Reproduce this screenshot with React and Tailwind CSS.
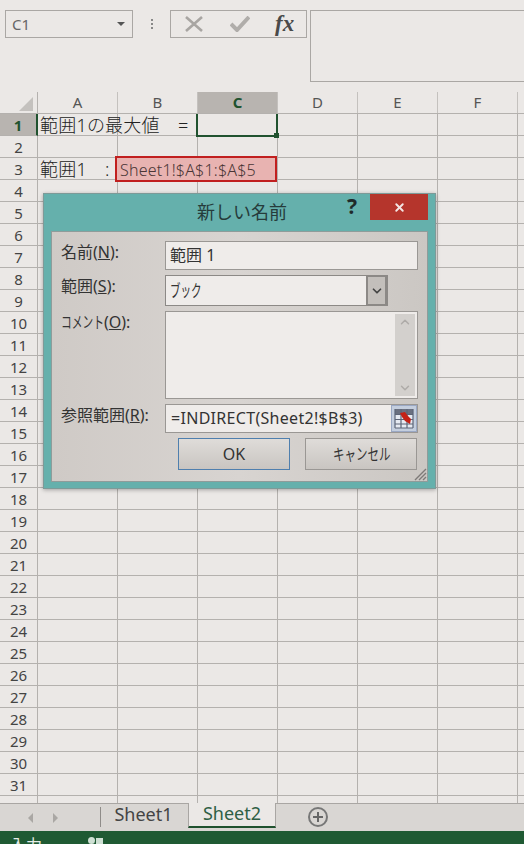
import { X, ChevronDown, ChevronUp } from 'lucide-react'

const font = 'font-["Noto_Sans","Noto_Sans_CJK_JP",sans-serif]'
const cols = ['A', 'B', 'C', 'D', 'E', 'F']
const rows = Array.from({ length: 32 }, (_, i) => i + 1)

// the reference's katakana is much narrower than Noto's, so squeeze it
function Kana({ w, scale, children }) {
  return (
    <span className={`inline-block whitespace-nowrap origin-left ${w} ${scale}`}>{children}</span>
  )
}

function Row({ n }) {
  const active = n === 1
  return (
    <div className="flex h-[22px] shrink-0">
      <div
        className={`w-[38px] shrink-0 flex items-center justify-center pt-[2px] border-r border-b border-[#b4b1ae] text-[15px] ${
          active ? 'bg-[#b8b4b0] text-[#20522f] font-bold border-r-[#20522f] border-r-2' : 'text-[#444]'
        }`}
      >
        {n < 32 ? n : ''}
      </div>
      {cols.map(c => (
        <div key={c} className="relative w-[80px] shrink-0 h-full border-r border-b border-[#b4b1ae] whitespace-nowrap">
          {n === 1 && c === 'A' && (
            <span className="absolute left-[2px] top-[-3px] text-[18px] leading-[28px] font-light tracking-[0.2px] text-[#222] z-10">範囲1の最大値　=</span>
          )}
          {n === 3 && c === 'A' && (
            <span className="absolute left-[2px] top-[-3px] text-[18px] leading-[28px] font-light tracking-[0.2px] text-[#222]">範囲1　:</span>
          )}
          {n === 1 && c === 'C' && (
            <div className="absolute left-[-2px] top-[-2px] w-[82px] h-[25px] border-2 border-[#20522f] z-10">
              <div className="absolute right-[-3px] bottom-[-3px] w-[5px] h-[5px] bg-[#20522f]" />
            </div>
          )}
          {n === 3 && c === 'B' && (
            <div className="absolute left-[-3px] top-[-2px] w-[162px] h-[26px] border-2 border-[#c11f1f] bg-[#e8b3b1] z-10 pl-[3px] text-[16px] leading-[24px] font-light tracking-[0.2px] text-[#4a3636]">
              Sheet1!$A$1:$A$5
            </div>
          )}
        </div>
      ))}
      <div className="flex-1 border-b border-[#b4b1ae]" />
    </div>
  )
}

function Field({ label, mnemonic, children, className = '' }) {
  return (
    <div className={`flex ${className}`}>
      <div className="w-[113px] shrink-0 pl-[9px] pt-[1px] text-[16px] leading-[20px] text-[#333] whitespace-nowrap">
        {label}(<span className="underline">{mnemonic}</span>):
      </div>
      {children}
    </div>
  )
}

function RefIcon() {
  return (
    <svg width="26" height="27" viewBox="0 0 26 27" className="shrink-0">
      <rect x="0.5" y="0.5" width="25" height="26" fill="#c4cede" stroke="#9aa8c4" />
      <rect x="4" y="4" width="18" height="19" fill="#e6eaf2" />
      <path d="M4 4h18v5H4z" fill="#6a7080" />
      <path d="M4 9.5h18M4 14.5h18M4 19h18M4 23h18M4 4v19M10 4v19M16 4v19M22 4v19" stroke="#5d6577" strokeWidth="1.2" fill="none" />
      <path d="M9 8l5-1 3 4 3 3-1 5-5-3-3-4z" fill="#c42116" />
    </svg>
  )
}

function Dialog() {
  return (
    <div className="absolute left-[43px] top-[193px] w-[393px] h-[296px] bg-[#65b0ac] border border-[#7d9a98] shadow-[0_1px_4px_rgba(0,0,0,0.3)] z-20 px-[7px] pb-[6px] flex flex-col">
      <div className="relative h-[37px] shrink-0 flex items-center justify-center">
        <span className="text-[18px] text-[#263c3b] pl-[5px]">新しい名前</span>
        <span className="absolute left-[296px] top-[-1px] text-[21px] font-bold leading-[26px] text-[#1f2a2a]">?</span>
        <div className="absolute right-0 top-0 w-[58px] h-[26px] bg-[#b5352c] flex items-center justify-center">
          <X size={13} strokeWidth={3.5} className="text-[#f3e6e4]" />
        </div>
      </div>
      <div className="relative flex-1 border border-[#8f9c9a] bg-gradient-to-r from-[#cfcac6] via-[#d8d4d1] to-[#cbc7c3] pt-[9px] pr-[9px] flex flex-col">
        <Field label="名前" mnemonic="N">
          <div className="flex-1 h-[29px] border border-[#9a9794] bg-[#efecea] pl-[4px] text-[16px] leading-[27px] text-[#333]">範囲 1</div>
        </Field>
        <Field label="範囲" mnemonic="S" className="mt-[5px]">
          <div className="w-[223px] h-[31px] border border-[#8c8986] bg-[#efecea] flex">
            <div className="flex-1 pl-[4px] text-[17px] leading-[30px] text-[#333]">
              <Kana w="w-[31px]" scale="scale-x-[0.62]">ブック</Kana>
            </div>
            <div className="w-[21px] border-l-2 border-r-2 border-t border-b border-[#8c8986] bg-[#c3bfbb] flex items-center justify-center">
              <ChevronDown size={14} strokeWidth={3} className="text-[#444]" />
            </div>
          </div>
        </Field>
        <Field label={<Kana w="w-[43px]" scale="scale-x-[0.67]">コメント</Kana>} mnemonic="O" className="mt-[5px]">
          <div className="flex-1 h-[88px] border border-[#9a9794] bg-[#efecea] flex justify-end pr-[2px] py-[2px]">
            <div className="w-[20px] bg-[#d3d0cd] flex flex-col justify-between items-center py-[1px]">
              <ChevronUp size={14} strokeWidth={2.5} className="text-[#aeaba8]" />
              <ChevronDown size={14} strokeWidth={2.5} className="text-[#aeaba8]" />
            </div>
          </div>
        </Field>
        <Field label="参照範囲" mnemonic="R" className="mt-[5px]">
          <div className="flex-1 h-[29px] border border-[#9a9794] bg-[#efecea] flex">
            <div className="flex-1 pl-[5px] text-[16px] leading-[27px] tracking-[0.3px] text-[#333] whitespace-nowrap">=INDIRECT(Sheet2!$B$3)</div>
            <RefIcon />
          </div>
        </Field>
        <div className="flex mt-[5px] ml-[126px] gap-[15px] text-[16px] text-[#333]">
          <div className="w-[112px] h-[32px] border border-[#4f7fae] bg-gradient-to-b from-[#dfdcd9] to-[#c9c5c1] flex items-center justify-center">OK</div>
          <div className="w-[112px] h-[32px] border border-[#9a9794] bg-gradient-to-b from-[#dfdcd9] to-[#c9c5c1] flex items-center justify-center">
            <Kana w="w-[57px]" scale="scale-x-[0.72]">キャンセル</Kana>
          </div>
        </div>
        <svg width="14" height="14" viewBox="0 0 14 14" className="absolute right-0 bottom-0">
          <path d="M13 2L2 13M13 6L6 13M13 10L10 13" stroke="#7d7a78" strokeWidth="1.4" />
        </svg>
      </div>
    </div>
  )
}

export default function App() {
  return (
    <div className={`relative w-[524px] h-[844px] overflow-hidden bg-[#ebe8e6] flex flex-col ${font}`}>
      {/* Formula bar */}
      <div className="h-[92px] shrink-0 flex items-start pt-[10px] pl-[5px]">
        <div className="w-[128px] h-[28px] border border-[#aaa7a4] flex items-center justify-between pl-[6px] pr-[7px] text-[15px] text-[#666]">
          C1
          <span className="w-0 h-0 border-x-[4px] border-x-transparent border-t-[4px] border-t-[#555]" />
        </div>
        <div className="w-[37px] h-[28px] flex items-center justify-center">
          <div className="flex flex-col gap-[2px]">
            <span className="w-[2px] h-[2px] bg-[#888]" />
            <span className="w-[2px] h-[2px] bg-[#888]" />
            <span className="w-[2px] h-[2px] bg-[#888]" />
          </div>
        </div>
        <div className="w-[137px] h-[28px] border border-[#aaa7a4] flex items-center pl-[14px]">
          <svg width="18" height="16" viewBox="0 0 18 16" className="shrink-0">
            <path d="M1 1l16 14M17 1L1 15" stroke="#a8a5a2" strokeWidth="2.6" fill="none" />
          </svg>
          <svg width="20" height="16" viewBox="0 0 20 16" className="shrink-0 ml-[27px]">
            <path d="M1 8l6 6L19 1" stroke="#b0adaa" strokeWidth="4" fill="none" />
          </svg>
          <span className="ml-[25px] font-['Liberation_Serif',serif] italic font-bold text-[23px] leading-[28px] text-[#4a4a4a]">fx</span>
        </div>
        <div className="ml-[3px] flex-1 h-[72px] border border-[#aaa7a4] border-r-0" />
      </div>

      {/* Column headers */}
      <div className="flex h-[22px] shrink-0 border-b border-[#b4b1ae]">
        <div className="w-[38px] shrink-0 border-r border-[#b4b1ae] relative">
          <span className="absolute right-[4px] bottom-[2px] w-0 h-0 border-l-[14px] border-l-transparent border-b-[14px] border-b-[#c4c1be]" />
        </div>
        {cols.map(c => (
          <div
            key={c}
            className={`w-[80px] shrink-0 flex items-center justify-center text-[15px] border-r border-[#c4c1be] ${
              c === 'C' ? 'bg-[#b8b4b0] text-[#20522f] font-bold' : 'text-[#555]'
            }`}
          >
            {c}
          </div>
        ))}
      </div>

      {/* Grid */}
      <div className="flex-1 overflow-hidden flex flex-col">
        {rows.map(n => (
          <Row key={n} n={n} />
        ))}
      </div>

      {/* Sheet tabs */}
      <div className="h-[28px] shrink-0 flex bg-[#d9d6d3] border-t border-[#a9a6a3] relative">
        <div className="w-[100px] flex items-center pl-[28px] gap-[20px]">
          <span className="w-0 h-0 border-y-[5px] border-y-transparent border-r-[5px] border-r-[#aaa7a4]" />
          <span className="w-0 h-0 border-y-[5px] border-y-transparent border-l-[5px] border-l-[#aaa7a4]" />
        </div>
        <div className="w-px h-[20px] mt-[3px] bg-[#8f8c89]" />
        <div className="w-[87px] pr-[2px] text-center text-[18px] leading-[21px] text-[#444]">Sheet1</div>
        <div className="w-[88px] h-[25px] mt-[-1px] bg-[#ebe8e6] border-x border-[#a9a6a3] border-b-2 border-b-[#20522f] text-center text-[18px] leading-[21px] text-[#2f5f45]">Sheet2</div>
        <div className="ml-[32px] mt-[3px] w-[20px] h-[20px] rounded-full border-2 border-[#777] flex items-center justify-center">
          <svg width="10" height="10" viewBox="0 0 10 10"><path d="M5 0v10M0 5h10" stroke="#666" strokeWidth="2" /></svg>
        </div>
      </div>

      {/* Status bar */}
      <div className="h-[13px] shrink-0 bg-[#1f5a33] relative overflow-hidden text-[#e6ece8] text-[16px] leading-[20px] pl-[10px] pt-[4px]">
        入力
        <svg width="15" height="7" viewBox="0 0 15 7" className="absolute left-[88px] top-[6px]">
          <circle cx="3.5" cy="3.5" r="3.5" fill="#cfe0d4" />
          <rect x="8" y="1" width="7" height="6" fill="#cfe0d4" />
        </svg>
      </div>

      <Dialog />
    </div>
  )
}
